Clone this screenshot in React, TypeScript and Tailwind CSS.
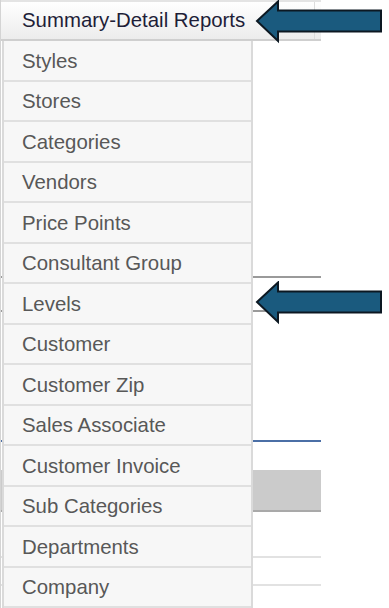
import React from "react";

const menuItems = [
  "Styles",
  "Stores",
  "Categories",
  "Vendors",
  "Price Points",
  "Consultant Group",
  "Levels",
  "Customer",
  "Customer Zip",
  "Sales Associate",
  "Customer Invoice",
  "Sub Categories",
  "Departments",
  "Company",
];

const Arrow = ({ className }: { className: string }) => (
  <svg className={className} width="130" height="44" viewBox="0 0 130 44">
    <polygon
      points="2,21 23,1.5 23,10.5 126,10.5 126,31.5 23,31.5 23,41"
      fill="#1a5a7e"
      stroke="#0c1822"
      strokeWidth="2"
      strokeLinejoin="miter"
    />
  </svg>
);

export default function App() {
  return (
    <div
      className="relative w-[389px] h-[608px] bg-white overflow-hidden"
      style={{ fontFamily: '"Liberation Sans", Arial, sans-serif' }}
    >
      {/* page behind the dropdown */}
      <div className="w-[321px] border-l border-[#d4d4d4] h-full">
        <div className="h-[41px] border-t-2 border-b-2 border-t-[#e4e4e4] border-b-[#cfcfcf] bg-gradient-to-b from-white to-[#ececec] flex items-center">
          <span className="pl-[21px] text-[20.4px] text-[#1e1e38] leading-none w-[314px] border-r border-[#dcdcdc] h-full flex items-center">
            Summary-Detail Reports
          </span>
        </div>
        <div className="h-[235px]" />
        <div className="h-[2px] bg-[#9a9a9a]" />
        <div className="h-[32px]" />
        <div className="h-[2px] bg-[#9a9a9a]" />
        <div className="h-[128px]" />
        <div className="h-[2px] bg-[#4b6fa6]" />
        <div className="h-[28px]" />
        <div className="h-[42px] bg-[#cbcbcb] border-b-2 border-[#a9a9a9]" />
        <div className="h-[44px]" />
        <div className="h-[2px] bg-[#e2e2e2]" />
        <div className="h-[26px]" />
        <div className="h-[2px] bg-[#e2e2e2]" />
      </div>

      {/* dropdown */}
      <ul className="absolute left-[2px] top-[41px] w-[251px] border-l-2 border-r-2 border-[#dadada] bg-[#f7f7f7]">
        {menuItems.map((item) => (
          <li
            key={item}
            className="h-[40.5px] flex items-center pt-[1px] pl-[18px] text-[20.4px] text-[#585858] border-b-2 border-[#e0e0e0] leading-none"
          >
            {item}
          </li>
        ))}
      </ul>

      <Arrow className="absolute left-[255px] top-0" />
      <Arrow className="absolute left-[255px] top-[281px]" />
    </div>
  );
}
